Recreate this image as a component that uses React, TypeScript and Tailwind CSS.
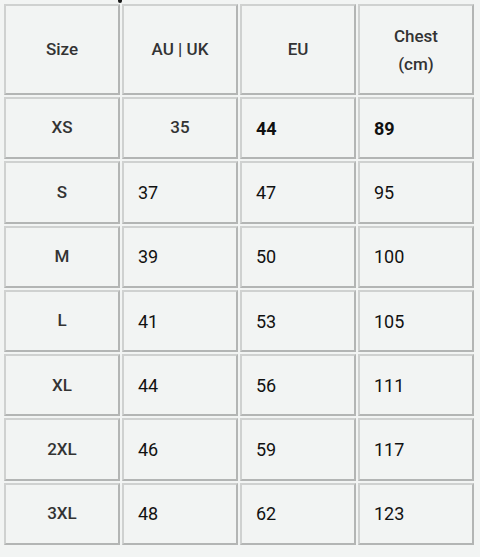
const rows = [
  { size: "XS", au: "35", eu: "44", chest: "89", first: true },
  { size: "S", au: "37", eu: "47", chest: "95" },
  { size: "M", au: "39", eu: "50", chest: "100" },
  { size: "L", au: "41", eu: "53", chest: "105" },
  { size: "XL", au: "44", eu: "56", chest: "111" },
  { size: "2XL", au: "46", eu: "59", chest: "117" },
  { size: "3XL", au: "48", eu: "62", chest: "123" },
];

const cell =
  "flex items-center border-2 border-t-[#cfd1d0] border-l-[#cfd1d0] border-r-[#b3b5b4] border-b-[#b3b5b4] bg-[#f2f4f3]";

export default function App() {
  return (
    <div
      className="w-[480px] h-[557px] bg-[#f2f4f3] overflow-hidden"
      style={{ fontFamily: "Roboto, 'Liberation Sans', sans-serif" }}
    >
      <div className="h-[4px] flex">
        <div className="ml-[118px] w-[4px] h-[3px] bg-[#1a1a1a] rounded-b-sm" />
      </div>
      <div className="pl-[4px] grid grid-cols-[116px_116px_116px_116px] grid-rows-[91px_repeat(7,62.3px)] gap-[2px]">
        <div className={`${cell} justify-center text-[17px] font-medium text-[#333]`}>Size</div>
        <div className={`${cell} justify-center text-[17px] font-medium text-[#333]`}>AU | UK</div>
        <div className={`${cell} justify-center text-[17px] font-medium text-[#333]`}>EU</div>
        <div className={`${cell} justify-center text-center text-[17px] leading-[28px] font-medium text-[#333]`}>
          Chest
          <br />
          (cm)
        </div>

        {rows.map((r) => (
          <div key={r.size} className="contents">
            <div className={`${cell} justify-center text-[17px] font-medium text-[#333]`}>{r.size}</div>
            {r.first ? (
              <>
                <div className={`${cell} justify-center text-[17px] font-medium text-[#333]`}>{r.au}</div>
                <div className={`${cell} pl-[14px] text-[18px] font-bold text-[#111]`}>{r.eu}</div>
                <div className={`${cell} pl-[14px] text-[18px] font-bold text-[#111]`}>{r.chest}</div>
              </>
            ) : (
              <>
                <div className={`${cell} pl-[14px] text-[18px] text-[#111]`}>{r.au}</div>
                <div className={`${cell} pl-[14px] text-[18px] text-[#111]`}>{r.eu}</div>
                <div className={`${cell} pl-[14px] text-[18px] text-[#111]`}>{r.chest}</div>
              </>
            )}
          </div>
        ))}
      </div>
    </div>
  );
}
